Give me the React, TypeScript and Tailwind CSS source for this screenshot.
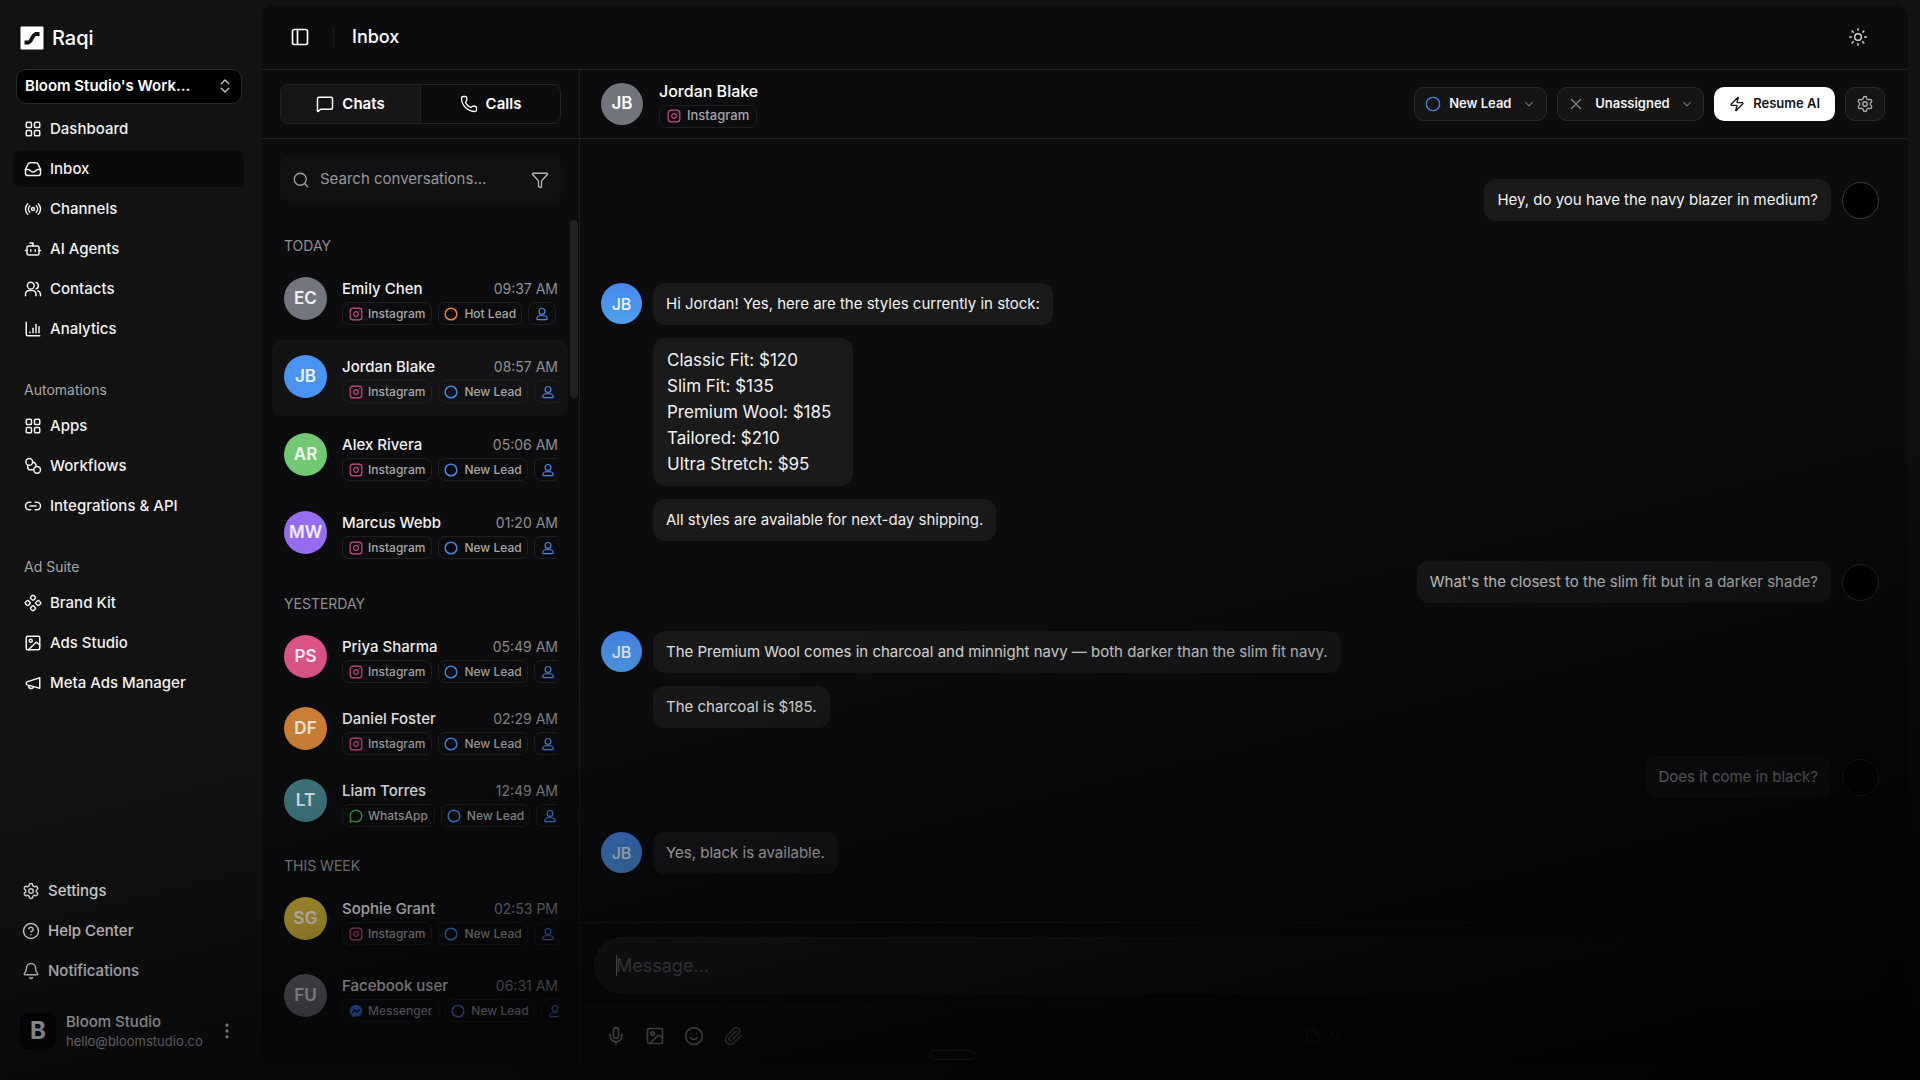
import React from 'react';
import {
  Bell,
  Bot,
  ChevronDown,
  ChevronsUpDown,
  Circle,
  CircleHelp,
  EllipsisVertical,
  Funnel,
  Image,
  Instagram,
  Link2,
  MessageCircle,
  MessageSquare,
  Mic,
  PanelLeft,
  Paperclip,
  Phone,
  Radio,
  Search,
  Settings,
  Smile,
  StickyNote,
  Sun,
  X,
  Zap,
} from 'lucide-react';

interface IconProps {
  className?: string;
  strokeWidth?: number;
}

type IconType = React.ComponentType<IconProps>;

interface NavItem {
  label: string;
  icon: IconType;
  active?: boolean;
}

interface Conversation {
  name: string;
  initials: string;
  time: string;
  color: string;
  channel: 'Instagram' | 'WhatsApp' | 'Messenger';
  status: 'New Lead' | 'Hot Lead';
  active?: boolean;
}

interface ConversationGroup {
  title: string;
  titleClass: string;
  rowClass: string;
  items: Conversation[];
}

function Stroke({ className, strokeWidth = 2, children }: IconProps & { children: React.ReactNode }) {
  return (
    <svg
      viewBox="0 0 24 24"
      fill="none"
      stroke="currentColor"
      strokeWidth={strokeWidth}
      strokeLinecap="round"
      strokeLinejoin="round"
      className={className}
      aria-hidden="true"
    >
      {children}
    </svg>
  );
}

function GridIcon(props: IconProps) {
  return (
    <Stroke {...props}>
      <rect x="3" y="3" width="7" height="7" rx="1.5" />
      <rect x="14" y="3" width="7" height="7" rx="1.5" />
      <rect x="14" y="14" width="7" height="7" rx="1.5" />
      <rect x="3" y="14" width="7" height="7" rx="1.5" />
    </Stroke>
  );
}

function TrayIcon(props: IconProps) {
  return (
    <Stroke {...props}>
      <path d="M5.2 5.6C5.8 4 6.6 3.5 8 3.5h8c1.4 0 2.2.5 2.8 2.1L22 12.5V18a2.5 2.5 0 0 1-2.5 2.5h-15A2.5 2.5 0 0 1 2 18v-5.5z" />
      <path d="M2 12.5h3.5c2.5 0 2.8 3.5 6.5 3.5s4-3.5 6.5-3.5H22" />
    </Stroke>
  );
}

function PeopleIcon(props: IconProps) {
  return (
    <Stroke {...props}>
      <circle cx="9" cy="7.5" r="4.5" />
      <path d="M2 21v-2a5 5 0 0 1 5-5h4a5 5 0 0 1 5 5v2" />
      <path d="M16 3.2a4.5 4.5 0 0 1 0 8.6" />
      <path d="M18.5 14.5A5 5 0 0 1 22 19v2" />
    </Stroke>
  );
}

function ChartIcon(props: IconProps) {
  return (
    <Stroke {...props}>
      <path d="M3 3v16a2 2 0 0 0 2 2h16" />
      <path d="M8 16v1" />
      <path d="M12 11v6" />
      <path d="M16 6v11" />
      <path d="M20 9v8" />
    </Stroke>
  );
}

function FlowIcon(props: IconProps) {
  return (
    <Stroke {...props}>
      <circle cx="7" cy="6.5" r="4.5" />
      <circle cx="17.5" cy="17" r="4.5" />
      <path d="M5 11v2.5A3.5 3.5 0 0 0 8.5 17H13" />
      <path d="M11.5 7a4.5 4.5 0 0 1 4.5 5" />
    </Stroke>
  );
}

function DiamondsIcon(props: IconProps) {
  return (
    <Stroke {...props}>
      <rect x="9.2" y="2.2" width="5.6" height="5.6" rx="1.8" transform="rotate(45 12 5)" />
      <rect x="9.2" y="16.2" width="5.6" height="5.6" rx="1.8" transform="rotate(45 12 19)" />
      <rect x="2.2" y="9.2" width="5.6" height="5.6" rx="1.8" transform="rotate(45 5 12)" />
      <rect x="16.2" y="9.2" width="5.6" height="5.6" rx="1.8" transform="rotate(45 19 12)" />
    </Stroke>
  );
}

function HornIcon(props: IconProps) {
  return (
    <Stroke {...props}>
      <path d="M4 10.5 21 5v14L4 14.5c-1.3-.4-1.3-3.6 0-4z" />
      <path d="M6.5 15.5a3 3 0 0 0 6 1.5" />
    </Stroke>
  );
}

function PersonIcon(props: IconProps) {
  return (
    <Stroke {...props}>
      <circle cx="12" cy="7.5" r="5" />
      <path d="M8 15h8c3 0 5 3 5 5 0 1-.5 1.5-1.5 1.5h-15C3.5 21.5 3 21 3 20c0-2 2-5 5-5z" />
    </Stroke>
  );
}

function MessengerIcon({ className }: IconProps) {
  return (
    <svg viewBox="0 0 24 24" className={className} aria-hidden="true">
      <path
        fill="#3b82f6"
        d="M12 1.5C6 1.5 1.5 5.9 1.5 11.7c0 3.1 1.3 5.7 3.5 7.5v3.3l3.2-1.3c1.2.4 2.4.6 3.8.6 6 0 10.5-4.3 10.5-10.1S18 1.5 12 1.5z"
      />
      <path fill="none" stroke="#0b0b0d" strokeWidth="2.4" strokeLinejoin="round" d="M5.5 15l4-5 4 3.5 5-4" />
    </svg>
  );
}

function Logo() {
  return (
    <svg viewBox="0 0 24 24" className="size-6" aria-hidden="true">
      <rect x="0.5" y="0.5" width="23" height="23" rx="1" fill="#fff" />
      <path fill="#111" d="M4.5 14.5h4l3.500-6 3-2.500h4.500v4h-4l-3.500 6-3 2.500H4.500z" />
    </svg>
  );
}

const mainNav: NavItem[] = [
  { label: 'Dashboard', icon: GridIcon },
  { label: 'Inbox', icon: TrayIcon, active: true },
  { label: 'Channels', icon: Radio },
  { label: 'AI Agents', icon: Bot },
  { label: 'Contacts', icon: PeopleIcon },
  { label: 'Analytics', icon: ChartIcon },
];

const automationNav: NavItem[] = [
  { label: 'Apps', icon: GridIcon },
  { label: 'Workflows', icon: FlowIcon },
  { label: 'Integrations & API', icon: Link2 },
];

const adNav: NavItem[] = [
  { label: 'Brand Kit', icon: DiamondsIcon },
  { label: 'Ads Studio', icon: Image },
  { label: 'Meta Ads Manager', icon: HornIcon },
];

const footerNav: NavItem[] = [
  { label: 'Settings', icon: Settings },
  { label: 'Help Center', icon: CircleHelp },
  { label: 'Notifications', icon: Bell },
];

const groups: ConversationGroup[] = [
  {
    title: 'TODAY',
    titleClass: '',
    rowClass: 'h-[76px] mb-0.5',
    items: [
      { name: 'Emily Chen', initials: 'EC', time: '09:37 AM', color: 'bg-[#73767f]', channel: 'Instagram', status: 'Hot Lead' },
      { name: 'Jordan Blake', initials: 'JB', time: '08:57 AM', color: 'bg-[#4b93f0]', channel: 'Instagram', status: 'New Lead', active: true },
      { name: 'Alex Rivera', initials: 'AR', time: '05:06 AM', color: 'bg-[#72c873]', channel: 'Instagram', status: 'New Lead' },
      { name: 'Marcus Webb', initials: 'MW', time: '01:20 AM', color: 'bg-[#946df0]', channel: 'Instagram', status: 'New Lead' },
    ],
  },
  {
    title: 'YESTERDAY',
    titleClass: 'mt-4',
    rowClass: 'h-[72px]',
    items: [
      { name: 'Priya Sharma', initials: 'PS', time: '05:49 AM', color: 'bg-[#dc5388]', channel: 'Instagram', status: 'New Lead' },
      { name: 'Daniel Foster', initials: 'DF', time: '02:29 AM', color: 'bg-[#d98638]', channel: 'Instagram', status: 'New Lead' },
      { name: 'Liam Torres', initials: 'LT', time: '12:49 AM', color: 'bg-[#437f85]', channel: 'WhatsApp', status: 'New Lead' },
    ],
  },
  {
    title: 'THIS WEEK',
    titleClass: 'mt-3.5',
    rowClass: 'h-[77px]',
    items: [
      { name: 'Sophie Grant', initials: 'SG', time: '02:53 PM', color: 'bg-[#d8b83a]', channel: 'Instagram', status: 'New Lead' },
      { name: 'Facebook user', initials: 'FU', time: '06:31 AM', color: 'bg-[#6d6e72]', channel: 'Messenger', status: 'New Lead' },
    ],
  },
];

function NavList({ items }: { items: NavItem[] }) {
  return (
    <ul className="flex flex-col gap-1">
      {items.map(({ label, icon: Icon, active }) => (
        <li key={label}>
          <a
            href="#"
            className={`flex h-9 items-center gap-2 rounded-md pl-[11px] text-[15px] font-medium text-[#f1f1f1] ${active ? 'bg-[#09090a]' : ''}`}
          >
            <Icon className="size-[18px] shrink-0" strokeWidth={2} />
            {label}
          </a>
        </li>
      ))}
    </ul>
  );
}

function Sidebar() {
  return (
    <aside className="flex w-[262px] shrink-0 flex-col pt-[25px] pb-[30px]">
      <a href="#" className="ml-5 flex h-[26px] items-center gap-2 text-xl font-medium text-white">
        <Logo />
        Raqi
      </a>
      <div className="relative mt-[18px] mr-5 ml-4">
        <select
          aria-label="Workspace"
          className="h-[35px] w-full appearance-none rounded-[10px] border border-[#2a2a2c] bg-black pl-2 text-[15px] font-semibold text-white"
        >
          <option>Bloom Studio's Work...</option>
        </select>
        <ChevronsUpDown className="pointer-events-none absolute top-2 right-2 size-[18px] text-[#c8c8c8]" strokeWidth={1.75} />
      </div>
      <nav className="mt-[7px] mr-[18px] ml-[13px]" aria-label="Main">
        <NavList items={mainNav} />
        <h2 className="mt-[33px] mb-2 pl-[11px] text-sm leading-5 text-[#a5a5a5]">Automations</h2>
        <NavList items={automationNav} />
        <h2 className="mt-[33px] mb-2 pl-[11px] text-sm leading-5 text-[#a5a5a5]">Ad Suite</h2>
        <NavList items={adNav} />
      </nav>
      <nav className="mt-auto mr-5 ml-[11px]" aria-label="Support">
        <NavList items={footerNav} />
      </nav>
      <div className="mt-[23px] ml-5 flex items-center">
        <div className="flex size-9 items-center justify-center rounded-lg bg-[#040405] text-2xl font-bold text-[#e6e6e6]">B</div>
        <div className="ml-2.5 flex w-[147px] flex-col">
          <span className="text-[15px] leading-5 font-medium text-[#f1f1f1]">Bloom Studio</span>
          <span className="text-[13px] leading-[18px] text-[#b8b8b8]">hello@bloomstudio.co</span>
        </div>
        <button aria-label="Account menu" className="ml-1 text-[#f1f1f1]">
          <EllipsisVertical className="size-5" />
        </button>
      </div>
    </aside>
  );
}

function ChannelBadge({ channel, large }: { channel: Conversation['channel']; large?: boolean }) {
  return (
    <span
      className={`flex h-[23px] shrink-0 items-center rounded-[7px] border border-[#1f1f22] font-medium text-[#a6a6a8] ${large ? 'gap-1.5 px-[7px] text-[13px]' : 'gap-[5px] px-1.5 text-xs'}`}
    >
      {channel === 'Instagram' && <Instagram className="size-3.5 text-[#d04e86]" strokeWidth={2} />}
      {channel === 'WhatsApp' && <MessageCircle className="size-3.5 text-[#4cb050]" strokeWidth={2} />}
      {channel === 'Messenger' && <MessengerIcon className="size-3.5" />}
      {channel}
    </span>
  );
}

function ConversationRow({ item, rowClass }: { item: Conversation; rowClass: string }) {
  return (
    <li className={rowClass}>
      <button
        className={`flex h-full w-full items-start gap-[15px] rounded-[10px] pt-[15px] pr-2.5 pl-3 text-left ${item.active ? 'bg-[#131315]' : ''}`}
      >
        <span
          className={`flex size-[43px] shrink-0 items-center justify-center rounded-full text-[17px] font-semibold text-white/90 ${item.color}`}
        >
          {item.initials}
        </span>
        <span className="flex min-w-0 flex-1 flex-col gap-[3px] pt-0.5">
          <span className="flex items-center justify-between leading-5">
            <span className="text-[15px] font-medium text-[#f1f1f1]">{item.name}</span>
            <span className="text-sm text-[#8f8f91]">{item.time}</span>
          </span>
          <span className="flex gap-1.5 overflow-hidden">
            <ChannelBadge channel={item.channel} />
            <span className="flex h-[23px] shrink-0 items-center gap-1.5 rounded-[7px] border border-[#1f1f22] px-[5px] text-xs font-medium text-[#a6a6a8]">
              <Circle
                className={`size-3.5 ${item.status === 'Hot Lead' ? 'text-[#e08a35]' : 'text-[#4a86e0]'}`}
                strokeWidth={2.5}
              />
              {item.status}
            </span>
            <span className="flex h-[23px] shrink-0 items-center rounded-[7px] border border-[#1f1f22] px-1.5 text-[#4a86e0]">
              <PersonIcon className="size-3.5" />
            </span>
          </span>
        </span>
      </button>
    </li>
  );
}

function ConversationList() {
  return (
    <section className="flex w-[318px] shrink-0 flex-col border-r border-[#1d1d1f]" aria-label="Conversations">
      <div className="flex h-[69px] items-center border-b border-[#232325] px-[18px]">
        <div role="tablist" className="flex h-10 w-full overflow-hidden rounded-lg border border-[#242426]">
          <button
            role="tab"
            aria-selected="true"
            className="flex flex-1 items-center justify-center gap-2 border-r border-[#242426] bg-[#161617] text-[15px] font-semibold text-white"
          >
            <MessageSquare className="size-[18px]" strokeWidth={2} />
            Chats
          </button>
          <button
            role="tab"
            aria-selected="false"
            className="flex flex-1 items-center justify-center gap-2 text-[15px] font-semibold text-white"
          >
            <Phone className="size-[18px]" strokeWidth={1.75} />
            Calls
          </button>
        </div>
      </div>
      <div className="mx-[18px] mt-[18px] flex h-[45px] items-center gap-2.5 rounded-lg bg-[#111113] px-3">
        <Search className="size-[18px] shrink-0 text-[#a0a0a2]" strokeWidth={1.75} />
        <input
          type="search"
          aria-label="Search conversations"
          placeholder="Search conversations..."
          className="min-w-0 flex-1 bg-transparent text-[15px] text-white outline-none placeholder:text-[#98989a]"
        />
        <button aria-label="Filter conversations" className="text-[#b4b4b6]">
          <Funnel className="size-[18px]" strokeWidth={1.75} />
        </button>
      </div>
      <div className="relative mt-[18px] flex-1 pt-2.5 pr-[11px] pl-[10px]">
        <div className="absolute top-0 right-px h-[178px] w-2 rounded-full bg-[#222224]" />
        {groups.map((group) => (
          <div key={group.title}>
            <h3 className={`h-8 pl-3 text-sm leading-8 text-[#8f8f91] ${group.titleClass}`}>{group.title}</h3>
            <ul>
              {group.items.map((item) => (
                <ConversationRow key={item.name} item={item} rowClass={group.rowClass} />
              ))}
            </ul>
          </div>
        ))}
      </div>
    </section>
  );
}

function Bubble({ children }: { children: React.ReactNode }) {
  return <div className="rounded-xl bg-[#1a1a1b] px-[13px] py-2.5 text-[15px] leading-[22px] text-[#f1f1f1]">{children}</div>;
}

function Incoming({ className, children }: { className: string; children: React.ReactNode }) {
  return (
    <div className={`flex items-start gap-[11px] ${className}`}>
      <div className="flex size-[41px] shrink-0 items-center justify-center rounded-full bg-gradient-to-b from-[#4688ee] to-[#50a0ee] text-base font-medium text-white/90">
        JB
      </div>
      <div className="flex flex-col items-start gap-[13px]">{children}</div>
    </div>
  );
}

function Outgoing({ className = '', children }: { className?: string; children: React.ReactNode }) {
  return (
    <div className={`flex items-center justify-end gap-[11px] pr-2 ${className}`}>
      <Bubble>{children}</Bubble>
      <div className="size-[37px] shrink-0 rounded-full border border-[#3a3a3c] bg-black" />
    </div>
  );
}

function ChatHeader() {
  return (
    <header className="flex h-[69px] items-center border-b border-[#232325] pr-[23px] pl-[21px]">
      <div className="flex size-[42px] items-center justify-center rounded-full bg-[#73757c] text-[17px] font-semibold text-white">JB</div>
      <div className="ml-4 flex flex-col items-start gap-1">
        <h2 className="text-base leading-5 font-medium text-white">Jordan Blake</h2>
        <ChannelBadge channel="Instagram" large />
      </div>
      <div className="ml-auto flex items-center gap-2.5 text-[13px] font-medium text-[#f1f1f1]">
        <div className="flex h-[34px] items-center rounded-[10px] border border-[#2a2a2c] bg-[#151516] px-2.5">
          <Circle className="mr-2 size-4 text-[#4a86e0]" strokeWidth={2} />
          <select aria-label="Lead status" className="appearance-none bg-transparent font-semibold">
            <option>New Lead</option>
          </select>
          <ChevronDown className="ml-2.5 size-3.5 text-[#8a8a8c]" strokeWidth={1.75} />
        </div>
        <div className="flex h-[34px] items-center rounded-[10px] border border-[#2a2a2c] bg-[#151516] px-[9px]">
          <X className="mr-2.5 size-[18px] text-[#8a8a8c]" strokeWidth={1.5} />
          <select aria-label="Assignee" className="appearance-none bg-transparent font-semibold">
            <option>Unassigned</option>
          </select>
          <ChevronDown className="ml-2.5 size-3.5 text-[#8a8a8c]" strokeWidth={1.75} />
        </div>
        <button className="flex h-[34px] items-center gap-2 rounded-[10px] bg-white px-[15px] font-semibold text-[#151515]">
          <Zap className="size-4" strokeWidth={2} />
          Resume AI
        </button>
        <button
          aria-label="Chat settings"
          className="flex h-[34px] w-10 items-center justify-center rounded-[10px] border border-[#2a2a2c] bg-[#151516] text-[#b4b4b6]"
        >
          <Settings className="size-[18px]" strokeWidth={1.75} />
        </button>
      </div>
    </header>
  );
}

function Messages() {
  return (
    <div className="flex-1 px-[21px] pt-10 pb-8">
      <Outgoing>Hey, do you have the navy blazer in medium?</Outgoing>
      <Incoming className="mt-[62px]">
        <Bubble>Hi Jordan! Yes, here are the styles currently in stock:</Bubble>
        <ul className="rounded-xl bg-[#1a1a1b] py-[9px] pr-[22px] pl-3.5 text-[17px] leading-[26px] text-[#f1f1f1]">
          <li>Classic Fit: $120</li>
          <li>Slim Fit: $135</li>
          <li>Premium Wool: $185</li>
          <li>Tailored: $210</li>
          <li>Ultra Stretch: $95</li>
        </ul>
        <Bubble>All styles are available for next-day shipping.</Bubble>
      </Incoming>
      <Outgoing className="mt-5">What's the closest to the slim fit but in a darker shade?</Outgoing>
      <Incoming className="mt-7">
        <Bubble>The Premium Wool comes in charcoal and minnight navy — both darker than the slim fit navy.</Bubble>
        <Bubble>The charcoal is $185.</Bubble>
      </Incoming>
      <Outgoing className="mt-7">Does it come in black?</Outgoing>
      <Incoming className="mt-[34px]">
        <Bubble>Yes, black is available.</Bubble>
      </Incoming>
    </div>
  );
}

function Composer() {
  return (
    <footer className="border-t border-[#232325]">
      <div className="relative mt-3.5 mr-6 mb-3 ml-3.5">
        <input
          aria-label="Message"
          placeholder="Message..."
          className="h-[57px] w-full rounded-full border border-[#242426] bg-[#1d1d1f] px-[21px] text-lg text-white outline-none placeholder:text-[#747478]"
        />
        <span className="absolute top-[18px] left-[22px] h-[21px] w-px bg-[#a0a0a4]" />
      </div>
      <div className="flex h-[59px] items-center gap-[19px] border-t border-[#1d1d1f] pl-[26px] text-[#b4b4b8]">
        <button aria-label="Record voice">
          <Mic className="size-5" strokeWidth={2} />
        </button>
        <button aria-label="Attach image">
          <Image className="size-5" strokeWidth={2} />
        </button>
        <button aria-label="Insert emoji">
          <Smile className="size-5" strokeWidth={2} />
        </button>
        <button aria-label="Attach file" className="opacity-60">
          <Paperclip className="size-5" strokeWidth={2} />
        </button>
        <button className="ml-auto flex items-center gap-2 pr-[540px] text-sm text-[#7a7a7e]">
          <StickyNote className="size-4" />
          Notes
        </button>
      </div>
    </footer>
  );
}

export default function App() {
  return (
    <div className="relative flex min-h-screen bg-[#121213] font-[Inter,sans-serif] text-white">
      <Sidebar />
      <main className="mt-[5px] mr-3 mb-[15px] flex min-w-0 flex-1 flex-col rounded-xl bg-[#0c0c0e]">
        <header className="flex h-[65px] items-center border-b border-[#232325] pr-10 pl-7">
          <button aria-label="Toggle sidebar">
            <PanelLeft className="size-5" strokeWidth={2} />
          </button>
          <span className="mx-[18px] ml-[23px] h-5 w-px bg-[#1c1c1e]" />
          <h1 className="text-lg font-medium">Inbox</h1>
          <button aria-label="Toggle theme" className="ml-auto text-[#d4d4d6]">
            <Sun className="size-5" strokeWidth={1.75} />
          </button>
        </header>
        <div className="flex flex-1">
          <ConversationList />
          <section className="flex min-w-0 flex-1 flex-col" aria-label="Chat with Jordan Blake">
            <ChatHeader />
            <Messages />
            <Composer />
          </section>
        </div>
      </main>
      {/* home indicator */}
      <div className="absolute bottom-5 left-[930px] h-2.5 w-[45px] rounded-full border border-[#5a5a5e]" />
      {/* the interface dims out towards the lower right corner */}
      <div className="pointer-events-none absolute inset-0 bg-[linear-gradient(166deg,rgba(2,3,5,0)_46%,rgba(2,3,5,0.15)_57%,rgba(2,3,5,0.35)_64%,rgba(2,3,5,0.55)_70%,rgba(2,3,5,0.68)_77%,rgba(2,3,5,0.95)_88%,rgb(2,3,5)_100%)]" />
    </div>
  );
}
